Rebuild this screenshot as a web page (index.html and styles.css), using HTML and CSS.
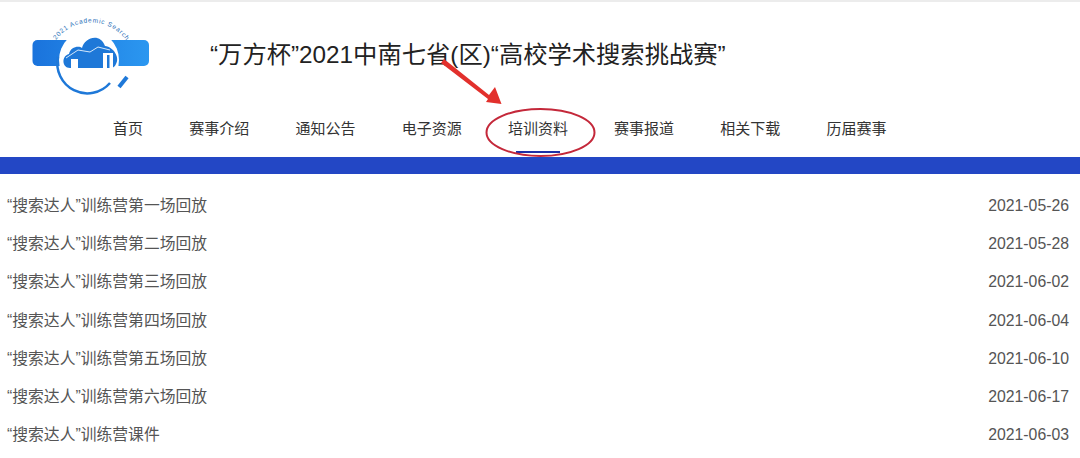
FILE: index.html
```html
<!DOCTYPE html>
<html>

<head>
    <meta charset="utf-8" />
    <title>万方杯</title>
    <link rel="stylesheet" href="styles.css">
</head>

<body>
    <div class="page">
        <div class="head">
            <svg class="logo" width="120" height="84" viewBox="0 0 120 84">
                <defs>
                    <linearGradient id="bar" x1="0" x2="1" y1="0" y2="0">
                        <stop offset="0" stop-color="#1a73dc" />
                        <stop offset="1" stop-color="#2b97f0" />
                    </linearGradient>
                </defs>
                <rect x="0.5" y="26" width="116.5" height="26" rx="5" fill="url(#bar)" />
                <circle cx="57" cy="46" r="30" fill="#fff" />
                <path d="M38 54 C30 54 29 42 37 40 C38 33 47 31 50 34 C52 24 68 18 73 32 C82 33 88 44 84 50 C83 53 80 54 78 54 Z" fill="#1e78d8" />
                <rect x="39" y="45" width="7" height="9" fill="#fff" />
                <rect x="71" y="39" width="10" height="15" fill="#fff" />
                <rect x="75" y="41" width="2.5" height="13" fill="#1e78d8" />
                <path d="M34 44 L46 36 L58 38 L66 33 L78 36" stroke="#d5e8fb" stroke-width="1" fill="none" />
                <path d="M26 43 A30 30 0 0 0 78 69" stroke="#1e78d8" stroke-width="2.5" fill="none" />
                <path d="M87 73 L95 63" stroke="#1e78d8" stroke-width="4" fill="none" />
                <path id="arc" d="M24 26 A43.5 43.5 0 0 1 98 33" fill="none" />
                <text class="logo-text"><textPath href="#arc">2021 Academic Search</textPath></text>
            </svg>
            <h1 class="title">“万方杯”2021中南七省(区)“高校学术搜索挑战赛”</h1>
        </div>

        <ul class="nav">
            <li>首页</li>
            <li>赛事介绍</li>
            <li>通知公告</li>
            <li>电子资源</li>
            <li class="active">培训资料</li>
            <li>赛事报道</li>
            <li>相关下载</li>
            <li>历届赛事</li>
        </ul>

        <div class="band"></div>

        <ul class="list">
            <li><span>“搜索达人”训练营第一场回放</span><span>2021-05-26</span></li>
            <li><span>“搜索达人”训练营第二场回放</span><span>2021-05-28</span></li>
            <li><span>“搜索达人”训练营第三场回放</span><span>2021-06-02</span></li>
            <li><span>“搜索达人”训练营第四场回放</span><span>2021-06-04</span></li>
            <li><span>“搜索达人”训练营第五场回放</span><span>2021-06-10</span></li>
            <li><span>“搜索达人”训练营第六场回放</span><span>2021-06-17</span></li>
            <li><span>“搜索达人”训练营课件</span><span>2021-06-03</span></li>
        </ul>

        <!-- red marks drawn over the screenshot -->
        <svg class="marks" width="1080" height="458" viewBox="0 0 1080 458">
            <ellipse cx="540.5" cy="132.5" rx="54" ry="23.5" fill="none" stroke="#c4283a" stroke-width="2" />
            <path d="M444 59 L489 95 L495 87 L501.5 104 L486 102 L488 99 L441 63 Z" fill="#e2302c" />
        </svg>
    </div>
</body>

</html>
```

FILE: styles.css
```css
* {
    box-sizing: border-box;
}

html,
body {
    margin: 0;
    padding: 0;
    background-color: #fff;
}

.page {
    position: relative;
    width: 1080px;
    height: 458px;
    overflow: hidden;
    font-family: "Liberation Sans", "Noto Sans CJK SC", sans-serif;
    border-top: 2px solid #ececec;
}

.head {
    display: flex;
    align-items: flex-start;
    height: 103px;
    padding: 12px 0 0 32px;
}

.logo {
    flex: none;
}

.logo-text {
    font-family: "Liberation Sans", sans-serif;
    font-size: 6.5px;
    letter-spacing: 0.75px;
    fill: #2a6fb8;
}

.title {
    margin: 25px 0 0 58px;
    font-size: 24.3px;
    line-height: 32px;
    font-weight: 400;
    color: #222;
    white-space: nowrap;
}

.nav {
    display: flex;
    height: 52px;
    margin: 0;
    padding: 0 0 0 90px;
    list-style: none;
}

.nav li {
    position: relative;
    padding: 14px 23.1px 0;
    font-size: 15px;
    line-height: 20px;
    color: #333;
}

.nav .active::after {
    content: "";
    position: absolute;
    left: 31px;
    right: 31px;
    bottom: 4px;
    height: 2px;
    background-color: #1c2fa8;
}

.band {
    height: 17px;
    background-color: #2347c5;
}

.list {
    margin: 0;
    padding: 13px 11px 0 7px;
    list-style: none;
}

.list li {
    display: flex;
    justify-content: space-between;
    height: 38.2px;
    font-size: 15.8px;
    line-height: 38px;
    color: #555;
}

.marks {
    position: absolute;
    left: 0;
    top: -2px;
    pointer-events: none;
}
```
